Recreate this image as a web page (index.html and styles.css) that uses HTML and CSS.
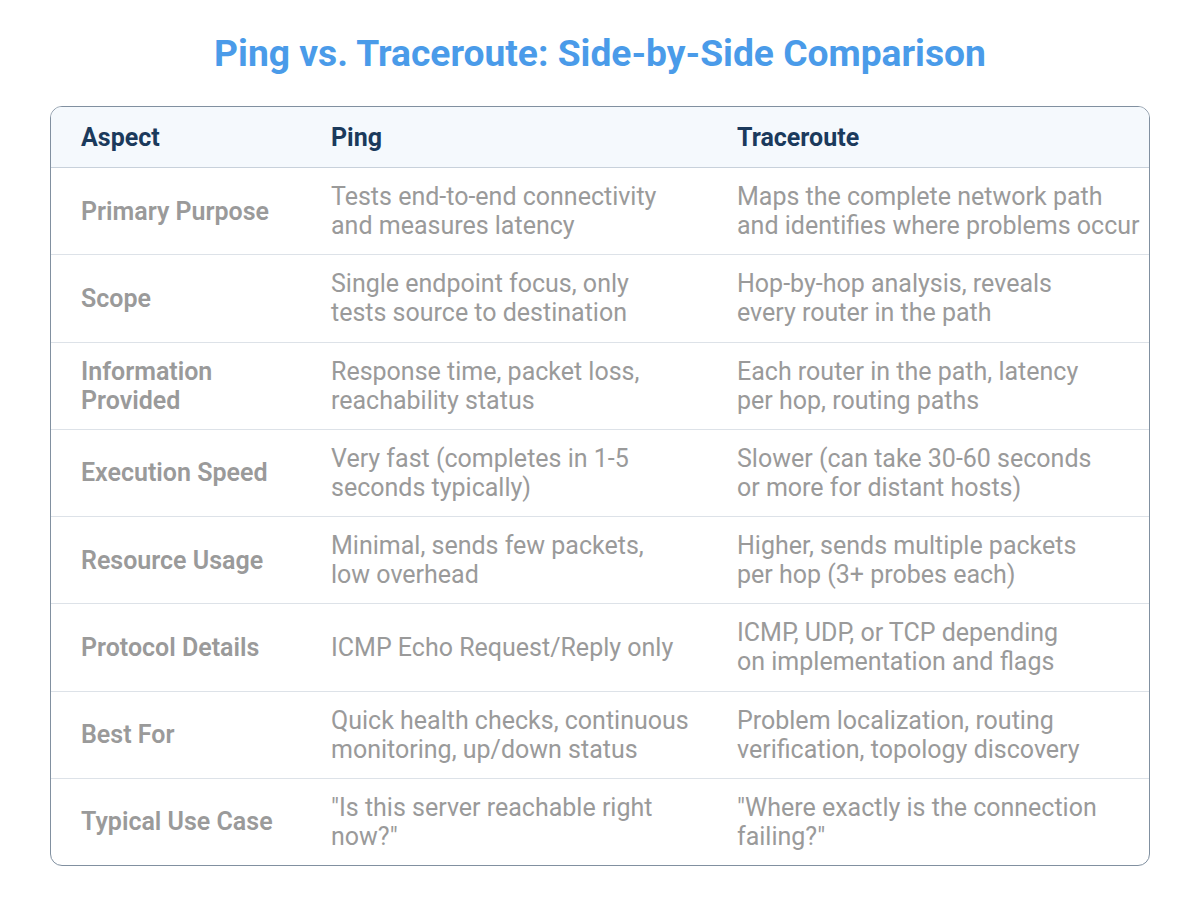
FILE: index.html
```html
<!DOCTYPE html>
<html>
<head>
<meta charset="utf-8">
<link rel="stylesheet" href="styles.css">
</head>
<body>
<h1 class="title">Ping vs. Traceroute: Side-by-Side Comparison</h1>
<div class="card">
<table class="cmp">
<colgroup><col class="c1"><col class="c2"><col class="c3"></colgroup>
<thead>
<tr><th>Aspect</th><th>Ping</th><th>Traceroute</th></tr>
</thead>
<tbody>
<tr><td class="aspect">Primary Purpose</td><td>Tests end-to-end connectivity<br>and measures latency</td><td>Maps the complete network path<br>and identifies where problems occur</td></tr>
<tr><td class="aspect">Scope</td><td>Single endpoint focus, only<br>tests source to destination</td><td>Hop-by-hop analysis, reveals<br>every router in the path</td></tr>
<tr><td class="aspect">Information<br>Provided</td><td>Response time, packet loss,<br>reachability status</td><td>Each router in the path, latency<br>per hop, routing paths</td></tr>
<tr><td class="aspect">Execution Speed</td><td>Very fast (completes in 1-5<br>seconds typically)</td><td>Slower (can take 30-60 seconds<br>or more for distant hosts)</td></tr>
<tr><td class="aspect">Resource Usage</td><td>Minimal, sends few packets,<br>low overhead</td><td>Higher, sends multiple packets<br>per hop (3+ probes each)</td></tr>
<tr><td class="aspect">Protocol Details</td><td>ICMP Echo Request/Reply only</td><td>ICMP, UDP, or TCP depending<br>on implementation and flags</td></tr>
<tr><td class="aspect">Best For</td><td>Quick health checks, continuous<br>monitoring, up/down status</td><td>Problem localization, routing<br>verification, topology discovery</td></tr>
<tr><td class="aspect">Typical Use Case</td><td>"Is this server reachable right<br>now?"</td><td>"Where exactly is the connection<br>failing?"</td></tr>
</tbody>
</table>
</div>
</body>
</html>
```
FILE: styles.css
```css
html, body {
  margin: 0;
  padding: 0;
  background: #ffffff;
}
body {
  font-family: Roboto, "Liberation Sans", sans-serif;
}
.title {
  margin: 0;
  padding-top: 31px;
  font-size: 37.2px;
  line-height: 44px;
  font-weight: 700;
  color: #4a9be9;
  text-align: center;
}
.card {
  margin: 31px 50px 0 50px;
  border: 1px solid #8190a0;
  border-radius: 12px;
  overflow: hidden;
}
.cmp {
  width: 100%;
  height: 758px;
  border-collapse: collapse;
  table-layout: fixed;
}
.c1 { width: 250px; }
.c2 { width: 406px; }
.cmp th {
  background: #f5f9fd;
  color: #1b3a5c;
  font-size: 25px;
  line-height: 29px;
  font-weight: 700;
  text-align: left;
  padding: 15.5px 20px 15.5px 30px;
  border-bottom: 1px solid #c8d1db;
}
.cmp td {
  color: #9a9a9a;
  font-size: 25px;
  line-height: 29px;
  font-weight: 400;
  padding: 14px 6px 14px 30px;
  vertical-align: middle;
  border-top: 1px solid #dde2e8;
  white-space: nowrap;
}
.cmp tbody tr:first-child td {
  border-top: none;
}
.cmp td.aspect {
  font-weight: 600;
  white-space: normal;
}
```
